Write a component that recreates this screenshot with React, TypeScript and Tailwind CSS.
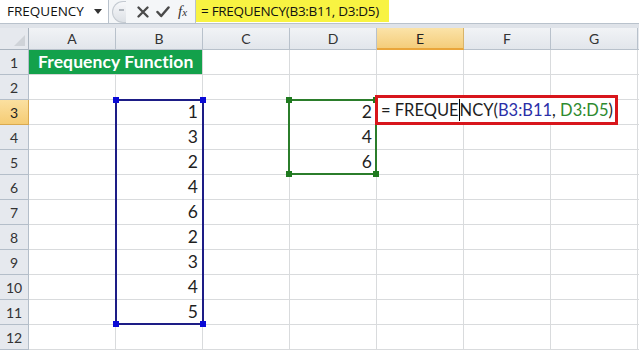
import React from "react";

const cols = ["A", "B", "C", "D", "E", "F", "G"];
const bVals: Record<number, string> = { 3: "1", 4: "3", 5: "2", 6: "4", 7: "6", 8: "2", 9: "3", 10: "4", 11: "5" };
const dVals: Record<number, string> = { 3: "2", 4: "4", 5: "6" };

function Handle({ className }: { className: string }) {
  return <div className={"absolute w-[6px] h-[6px] " + className} />;
}

export default function App() {
  const rows = Array.from({ length: 12 }, (_, i) => i + 1);
  return (
    <div className="w-[639px] h-[350px] bg-white overflow-hidden relative font-['Lato','Open_Sans',sans-serif] text-[#1e1e1e]">
      {/* Formula bar */}
      <div className="h-[28px] bg-[#dfe3e9] flex items-start">
        <div className="w-[109px] h-[24px] bg-white border-r border-b border-[#b9c2cc] flex items-center justify-between pl-[7px] pr-[6px] text-[13.5px] font-['Open_Sans',sans-serif] text-[#111]">
          <span>FREQUENCY</span>
          <svg width="8" height="5" viewBox="0 0 8 5"><path d="M0 0 L8 0 L4 5 Z" fill="#333" /></svg>
        </div>
        <div className="w-[86px] h-[24px] bg-[#f4f6f8] border-b border-[#b9c2cc] flex items-center">
          <div className="ml-[3px] w-[14px] h-[22px] rounded-l-full border border-r-0 border-[#c4cad1] bg-gradient-to-b from-[#f7f8fa] to-[#dde1e6] flex items-center justify-center">
            <div className="w-[5px] h-[2px] bg-[#b0b6bd] ml-[3px] mb-[4px]" />
          </div>
          <svg className="ml-[11px]" width="12" height="12" viewBox="0 0 12 12"><path d="M1.5 1.5 L10.5 10.5 M10.5 1.5 L1.5 10.5" stroke="#4a4a4a" strokeWidth="2.3" strokeLinecap="round" /></svg>
          <svg className="ml-[7px]" width="14" height="12" viewBox="0 0 14 12"><path d="M1.5 6 L5.2 10 L12.5 1.5" stroke="#4a4a4a" strokeWidth="2.5" fill="none" strokeLinecap="round" strokeLinejoin="round" /></svg>
          <span className="ml-[8px] text-[15px] italic font-['Liberation_Serif',serif] text-[#333] leading-none">f<span className="text-[11px]">x</span></span>
        </div>
        <div className="flex-1 h-[24px] bg-white border-b border-l border-[#b9c2cc] flex items-start">
          <div className="h-[22px] w-[193px] bg-[#f8f342] pl-[5px] flex items-center text-[13.5px] font-['Open_Sans',sans-serif] text-[#111] tracking-[-0.3px] whitespace-nowrap">
            = FREQUENCY(B3:B11, D3:D5)
          </div>
        </div>
      </div>

      {/* Grid */}
      <div className="relative">
        <div className="grid grid-cols-[29px_repeat(7,87px)_2px] grid-rows-[22px_repeat(12,25px)]">
          {/* Header row */}
          <div className="bg-[#e6e9ee] border-r border-b border-[#a9b3be] relative overflow-hidden">
            <svg className="absolute right-[3px] bottom-[3px]" width="11" height="11" viewBox="0 0 11 11"><path d="M11 0 L11 11 L0 11 Z" fill="#cfd3d8" /></svg>
          </div>
          {cols.map((c) => (
            <div
              key={c}
              className={
                "flex items-center justify-center text-[14px] border-r " +
                (c === "E"
                  ? "bg-gradient-to-b from-[#fbe3a8] to-[#f4cd7a] border-b-2 border-b-[#e9a53a] border-r-[#d8b46a] text-[#222]"
                  : "bg-gradient-to-b from-[#f1f3f6] to-[#e2e6eb] border-b border-[#b8c1cb] text-[#333]")
              }
            >
              {c}
            </div>
          ))}
          <div className="bg-[#e6e9ee] border-b border-[#b8c1cb]" />

          {rows.map((r) => (
            <React.Fragment key={r}>
              <div
                className={
                  "flex items-center justify-center text-[14px] border-r border-b " +
                  (r === 3
                    ? "bg-gradient-to-b from-[#fbe0a0] to-[#f5cc74] border-[#d9a94f] text-[#222]"
                    : "bg-[#e6e9ee] border-[#b4bec9] text-[#333]")
                }
              >
                {r}
              </div>
              {r === 1 ? (
                <div className="col-span-2 bg-[#13a14b] border-b border-r border-[#d6d6d6] flex items-center pl-[9px] text-white font-bold text-[17.5px] tracking-[0.1px]">
                  Frequency Function
                </div>
              ) : null}
              {cols.map((c) => {
                if (r === 1 && (c === "A" || c === "B")) return null;
                const v = c === "B" ? bVals[r] : c === "D" ? dVals[r] : undefined;
                return (
                  <div
                    key={c}
                    className="border-r border-b border-[#d9dbdd] flex items-end justify-end pr-[4px] pb-[1px] text-[17.5px] leading-[22px] text-[#1f1f1f]"
                  >
                    {v}
                  </div>
                );
              })}
              <div className="border-b border-[#d9dbdd]" />
            </React.Fragment>
          ))}
        </div>

        {/* Blue selection B3:B11 */}
        <div className="absolute left-[115px] top-[71px] w-[89px] h-[226px] border-2 border-[#1d1d86]">
          <Handle className="-left-[4px] -top-[4px] bg-[#0a0ad6]" />
          <Handle className="-right-[4px] -top-[4px] bg-[#0a0ad6]" />
          <Handle className="-left-[4px] -bottom-[4px] bg-[#0a0ad6]" />
          <Handle className="-right-[4px] -bottom-[4px] bg-[#0a0ad6]" />
        </div>

        {/* Green selection D3:D5 */}
        <div className="absolute left-[288px] top-[71px] w-[89px] h-[76px] border-2 border-[#2b7d2b]">
          <Handle className="-left-[4px] -top-[4px] bg-[#1f7a1f]" />
          <Handle className="-right-[4px] -top-[4px] bg-[#1f7a1f]" />
          <Handle className="-left-[4px] -bottom-[4px] bg-[#1f7a1f]" />
          <Handle className="-right-[4px] -bottom-[4px] bg-[#1f7a1f]" />
        </div>

        {/* Red edit box */}
        <div className="absolute left-[375px] top-[67px] w-[243px] h-[30px] border-[3px] border-[#d8161c] bg-white flex items-center pl-[3px] text-[16.5px] text-[#1e1e1e] whitespace-nowrap">
          <span>= FREQUE</span>
          <span className="inline-block w-[1px] h-[22px] bg-black" />
          <span>NCY(</span>
          <span className="text-[#2b2fa8]">B3:B11</span>
          <span>,&nbsp;</span>
          <span className="text-[#2e8a2e]">D3:D5</span>
          <span>)</span>
        </div>
      </div>
    </div>
  );
}
